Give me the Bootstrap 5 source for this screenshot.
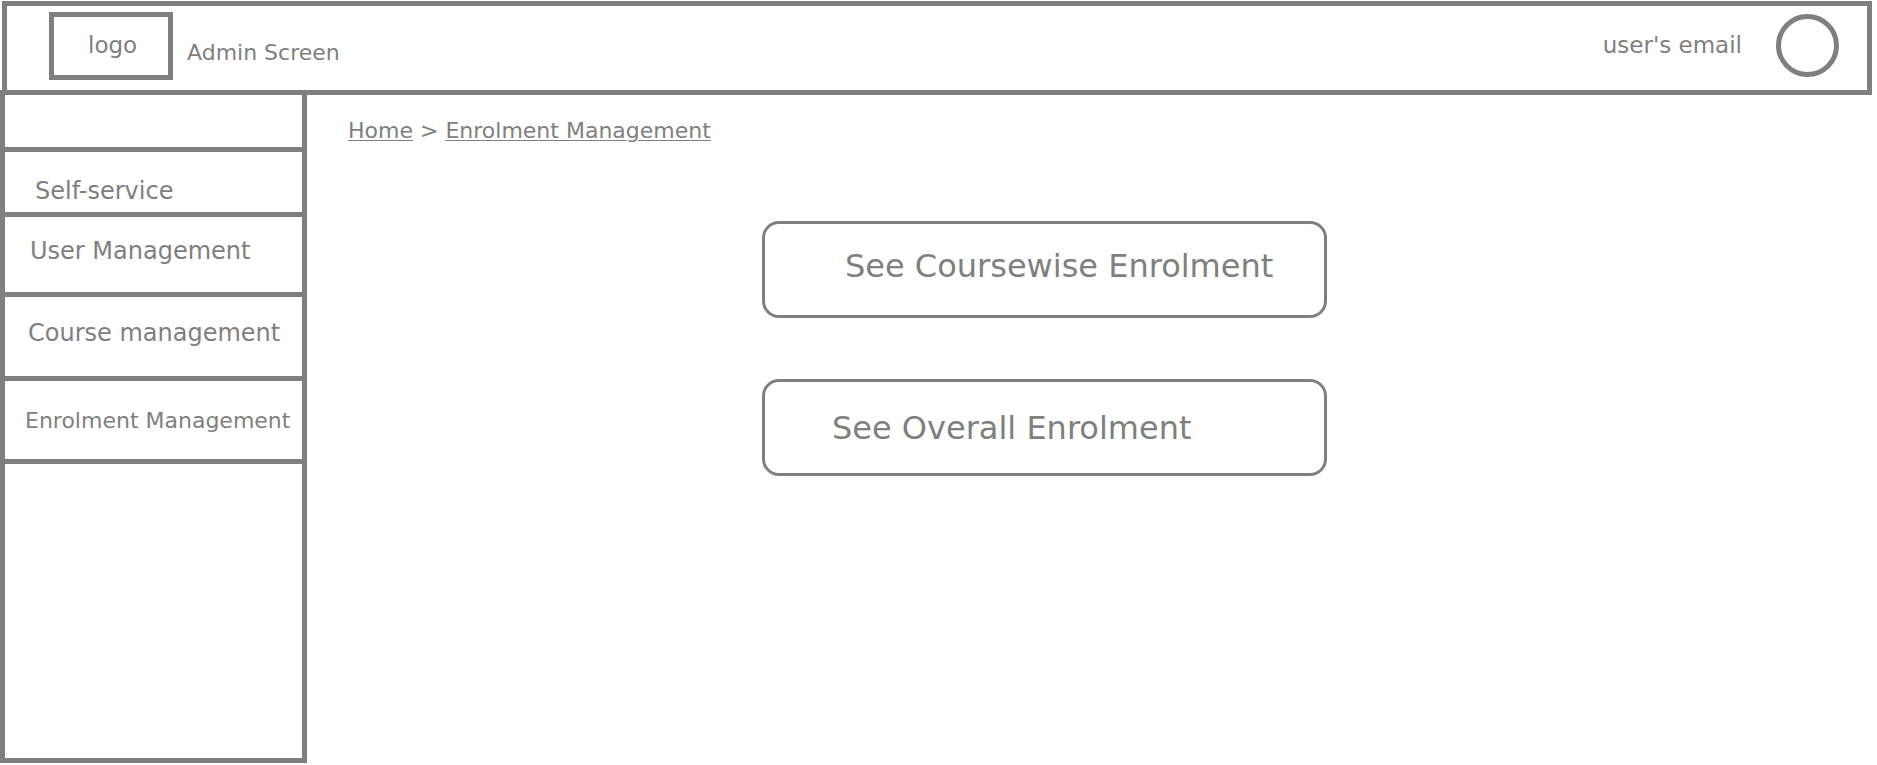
<!DOCTYPE html>
<html lang="en">
<head>
<meta charset="utf-8">
<meta name="viewport" content="width=device-width, initial-scale=1">
<title>Enrolment Management</title>
<link href="https://cdn.jsdelivr.net/npm/bootstrap@5.3.0/dist/css/bootstrap.min.css" rel="stylesheet">
<style>
  :root { --ink: #7f7f7f; --line: 5px solid var(--ink); }
  body { font-family: "DejaVu Sans", Verdana, sans-serif; font-size: 22px; line-height: 30px; color: var(--ink); background: #fff; }
  a, a:hover { color: inherit; }
  .topbar { border: var(--line); margin: 1px 5px 0 2px; height: 94px; padding: 6px 28px 0 42px; }
  .logo-box { border: var(--line); width: 124px; height: 68px; padding: 13px 0 0 34px; font-size: 23px; color: inherit; }
  .screen-title { margin: 26px 0 0 14px; }
  .user-mail { margin-top: 18px; font-size: 23px; }
  .avatar { width: 63px; height: 63px; border: var(--line); margin: 2px 0 0 34px; background: none; padding: 0; }
  .side { width: 307px; border: var(--line); margin: -5px 0 2px; font-size: 24px; }
  .side-item { display: block; border-bottom: var(--line); white-space: nowrap; }
  .side-blank { height: 57px; }
  .side-self { height: 65px; padding: 24px 0 0 30px; }
  .side-user { height: 80px; padding: 19px 0 0 25px; }
  .side-course { height: 84px; padding: 21px 0 0 23px; }
  .side-enrol { height: 83px; padding: 25px 0 0 20px; font-size: 22px; }
  .trail { gap: 7px; margin: 21px 0 0 41px; }
  .trail a { text-decoration-thickness: 1px; text-underline-offset: 2px; }
  .choices { gap: 61px; margin: 75px 16px 0 455px; }
  .choice { width: 565px; max-width: 100%; border: 3px solid var(--ink); border-radius: 17px; background: none; color: inherit; font-size: 32px; line-height: 40px; text-align: left; }
  .choice-course { padding: 22px 0 29px 80px; }
  .choice-overall { padding: 26px 0 25px 67px; }
</style>
</head>
<body>
<div class="d-flex flex-column min-vh-100">
  <header class="topbar d-flex align-items-start">
    <a href="#" class="logo-box text-decoration-none">logo</a>
    <div class="screen-title">Admin Screen</div>
    <div class="user-mail ms-auto">user's email</div>
    <button type="button" class="avatar rounded-circle" aria-label="Account"></button>
  </header>
  <div class="d-flex flex-grow-1">
    <nav class="side flex-shrink-0" aria-label="Main">
      <div class="side-item side-blank"></div>
      <a href="#" class="side-item side-self text-decoration-none">Self-service</a>
      <a href="#" class="side-item side-user text-decoration-none">User Management</a>
      <a href="#" class="side-item side-course text-decoration-none">Course management</a>
      <a href="#" class="side-item side-enrol text-decoration-none">Enrolment Management</a>
    </nav>
    <main class="flex-grow-1">
      <nav class="trail d-flex" aria-label="Breadcrumb">
        <a href="#">Home</a><span>&gt;</span><a href="#">Enrolment Management</a>
      </nav>
      <div class="choices d-flex flex-column align-items-start">
        <button type="button" class="choice choice-course">See Coursewise Enrolment</button>
        <button type="button" class="choice choice-overall">See Overall Enrolment</button>
      </div>
    </main>
  </div>
</div>
<script src="https://cdn.jsdelivr.net/npm/bootstrap@5.3.0/dist/js/bootstrap.bundle.min.js"></script>
</body>
</html>
